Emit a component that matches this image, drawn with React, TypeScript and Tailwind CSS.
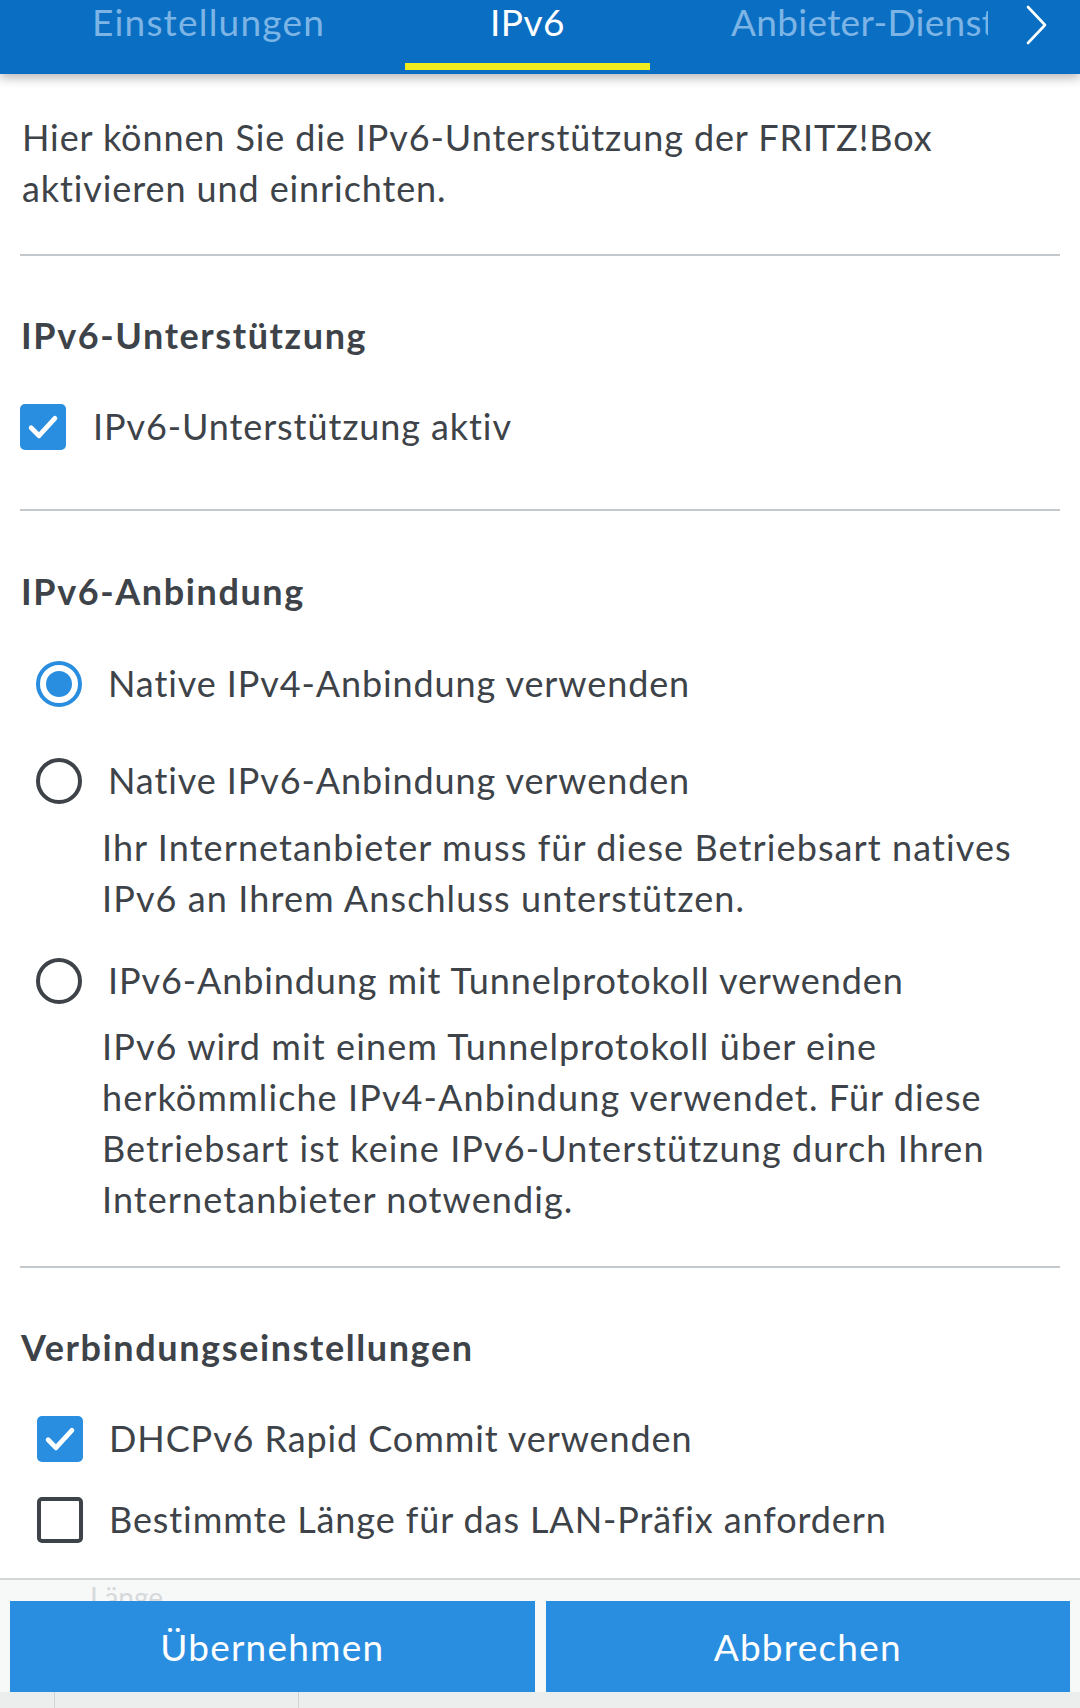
import React from "react";

const TEXT = "text-[#3d4348]";

function CheckBox({ checked }: { checked: boolean }) {
  if (checked) {
    return (
      <div className="w-[46px] h-[46px] rounded-[5px] bg-[#2a8ee0] flex items-center justify-center shrink-0">
        <svg width="38" height="38" viewBox="0 0 24 24" fill="none" stroke="white" strokeWidth="3" strokeLinecap="round" strokeLinejoin="round">
          <path d="M4.5 12.5l5 5L19.5 6.5" />
        </svg>
      </div>
    );
  }
  return <div className="w-[46px] h-[46px] rounded-[5px] border-[4px] border-[#3d4348] shrink-0" />;
}

function Radio({ checked }: { checked: boolean }) {
  if (checked) {
    return (
      <div className="w-[46px] h-[46px] rounded-full border-[4px] border-[#2a8ee0] flex items-center justify-center shrink-0">
        <div className="w-[26px] h-[26px] rounded-full bg-[#2a8ee0]" />
      </div>
    );
  }
  return <div className="w-[46px] h-[46px] rounded-full border-[4px] border-[#3d4348] shrink-0" />;
}

function Divider({ mt }: { mt: string }) {
  return <div className={`${mt} h-[2px] bg-[#c3c9cc] mx-[20px]`} />;
}

export default function App() {
  return (
    <div
      className="w-[1080px] h-[1708px] bg-white overflow-hidden flex flex-col"
      style={{ fontFamily: "Lato, 'Noto Sans', sans-serif" }}
    >
      {/* Header / tabs */}
      <div className="relative z-10 h-[74px] bg-[#0a6fc2] shadow-[0_4px_10px_rgba(0,0,0,0.28)] shrink-0 flex items-start">
        <div className="ml-[92px] w-[233px] h-[44px] flex items-center text-[37px] tracking-[1.2px] text-[#7db4e6] whitespace-nowrap">
          Einstellungen
        </div>
        <div className="ml-[80px] w-[245px] h-[74px] flex flex-col items-center">
          <div className="h-[44px] flex items-center text-[37px] tracking-[0.5px] text-white">IPv6</div>
          <div className="mt-[19px] w-full h-[7px] bg-[#f0ec1e]" />
        </div>
        <div className="ml-[81px] w-[257px] h-[44px] flex items-center text-[37px] tracking-[0.3px] text-[#7db4e6] whitespace-nowrap overflow-hidden">
          Anbieter-Dienste
        </div>
        <div className="ml-[37px] h-[50px] flex items-center">
          <svg width="24" height="42" viewBox="0 0 24 42" fill="none" stroke="white" strokeWidth="2.6" strokeLinecap="round" strokeLinejoin="round">
            <path d="M3 3l17 18L3 39" />
          </svg>
        </div>
      </div>

      <div className={`flex-1 ${TEXT} text-[36px] leading-[51px] tracking-[0.9px]`}>
        {/* Intro */}
        <p className="mt-[38px] px-[22px]">
          Hier können Sie die IPv6-Unterstützung der FRITZ!Box
          <br />
          aktivieren und einrichten.
        </p>

        <Divider mt="mt-[40px]" />

        {/* IPv6-Unterstützung */}
        <h2 className="mt-[54px] px-[21px] font-bold tracking-[1.6px]">IPv6-Unterstützung</h2>
        <div className="mt-[40px] flex items-center h-[51px] pl-[20px] gap-[27px]">
          <CheckBox checked />
          <span>IPv6-Unterstützung aktiv</span>
        </div>

        <Divider mt="mt-[57px]" />

        {/* IPv6-Anbindung */}
        <h2 className="mt-[55px] px-[21px] font-bold tracking-[1.6px]">IPv6-Anbindung</h2>
        <div className="mt-[41px] flex items-center h-[51px] pl-[36px] gap-[26px]">
          <Radio checked />
          <span>Native IPv4-Anbindung verwenden</span>
        </div>
        <div className="mt-[46px] flex items-center h-[51px] pl-[36px] gap-[26px]">
          <Radio checked={false} />
          <span>Native IPv6-Anbindung verwenden</span>
        </div>
        <p className="mt-[16px] pl-[102px] pr-[10px] tracking-[1.1px]">
          Ihr Internetanbieter muss für diese Betriebsart natives
          <br />
          IPv6 an Ihrem Anschluss unterstützen.
        </p>
        <div className="mt-[31px] flex items-center h-[51px] pl-[36px] gap-[26px]">
          <Radio checked={false} />
          <span>IPv6-Anbindung mit Tunnelprotokoll verwenden</span>
        </div>
        <p className="mt-[15px] pl-[102px] pr-[10px] tracking-[1.1px]">
          IPv6 wird mit einem Tunnelprotokoll über eine
          <br />
          herkömmliche IPv4-Anbindung verwendet. Für diese
          <br />
          Betriebsart ist keine IPv6-Unterstützung durch Ihren
          <br />
          Internetanbieter notwendig.
        </p>

        <Divider mt="mt-[41px]" />

        {/* Verbindungseinstellungen */}
        <h2 className="mt-[54px] px-[21px] font-bold tracking-[1.6px]">Verbindungseinstellungen</h2>
        <div className="mt-[40px] flex items-center h-[51px] pl-[37px] gap-[26px]">
          <CheckBox checked />
          <span>DHCPv6 Rapid Commit verwenden</span>
        </div>
        <div className="mt-[30px] flex items-center h-[51px] pl-[37px] gap-[26px]">
          <CheckBox checked={false} />
          <span>Bestimmte Länge für das LAN-Präfix anfordern</span>
        </div>
      </div>

      {/* Footer */}
      <div className="shrink-0 h-[130px] flex flex-col">
        <div className="h-[2px] bg-[#d4d4d4]" />
        <div className="relative bg-[#f7f8f8] h-[128px] flex flex-col">
          <div className="absolute left-[90px] top-[2px] text-[28px] leading-[30px] text-[#d6d9db]">Länge</div>
          <div className="relative mt-[21px] flex gap-[11px] px-[10px]">
            <button className="flex-1 h-[91px] bg-[#2a8ee0] text-white text-[37px] tracking-[1.2px] flex items-center justify-center">
              Übernehmen
            </button>
            <button className="flex-1 h-[91px] bg-[#2a8ee0] text-white text-[37px] tracking-[1.2px] flex items-center justify-center">
              Abbrechen
            </button>
          </div>
          <div className="flex-1 flex bg-[#eceeee]">
            <div className="ml-[54px] w-[1px] bg-[#d0d3d5]" />
            <div className="ml-[243px] w-[1px] bg-[#d0d3d5]" />
          </div>
        </div>
      </div>
    </div>
  );
}
